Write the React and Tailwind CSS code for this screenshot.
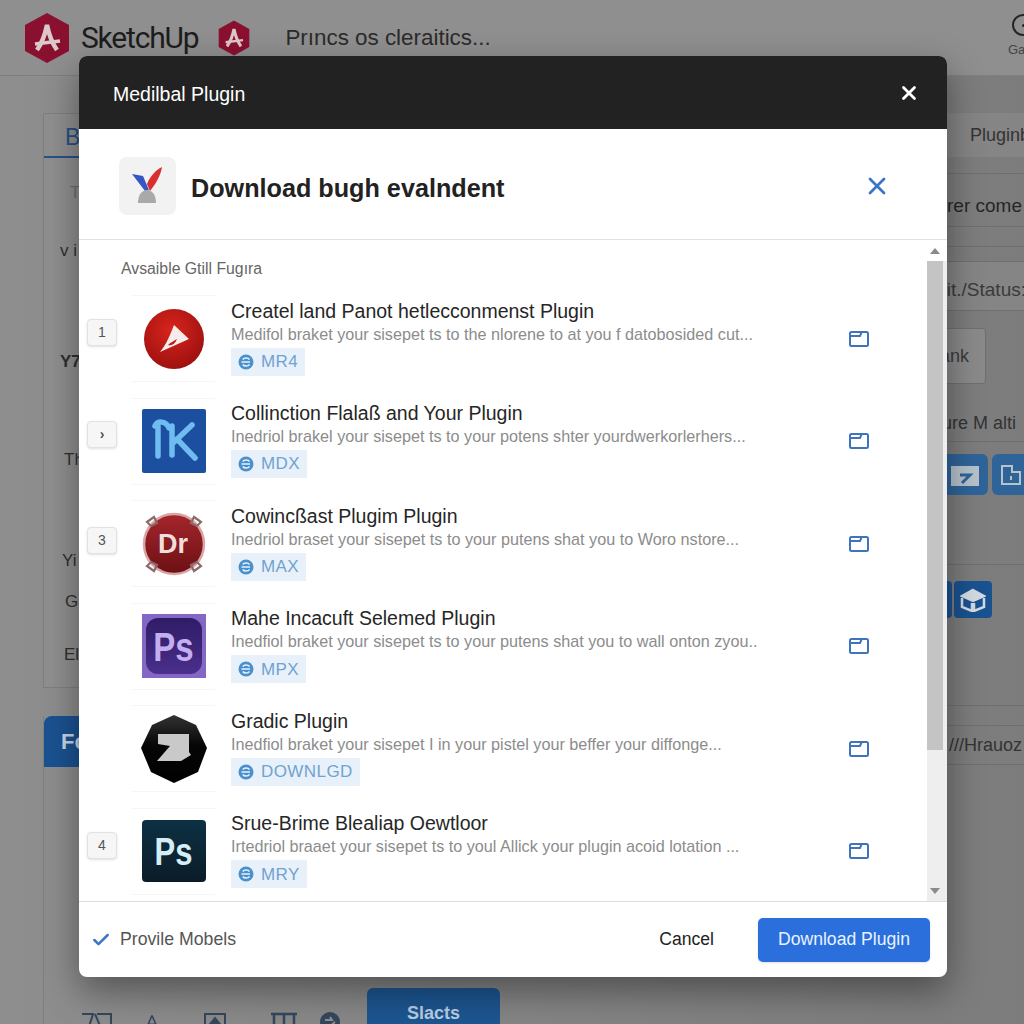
import { X, Check } from 'lucide-react';

const plugins = [
    { chip: '1', chipClass: '-mt-3', icon: 'red', title: 'Createl land Panot hetlecconmenst Plugin', text: 'Medifol braket your sisepet ts to the nlorene to at you f datobosided cut...', tag: 'MR4' },
    { chip: '›', chipClass: '-mt-3.5 font-bold', icon: 'blue', title: 'Collinction Flalaß and Your Plugin', text: 'Inedriol brakel your sisepet ts to your potens shter yourdwerkorlerhers...', tag: 'MDX' },
    { chip: '3', chipClass: '-mt-1.5', icon: 'dr', title: 'Cowincßast Plugim Plugin', text: 'Inedriol braset your sisepet ts to your putens shat you to Woro nstore...', tag: 'MAX' },
    { chip: '', chipClass: '', icon: 'ps', title: 'Mahe Incacuft Selemed Plugin', text: 'Inedfiol braket your sisepet ts to your putens shat you to wall onton zyou..', tag: 'MPX' },
    { chip: '', chipClass: '', icon: 'z', title: 'Gradic Plugin', text: 'Inedfiol braket your sisepet I in your pistel your beffer your diffonge...', tag: 'DOWNLGD' },
    { chip: '4', chipClass: '-mt-3', icon: 'psdark', title: 'Srue-Brime Blealiap Oewtloor', text: 'Irtedriol braaet your sisepet ts to youl Allick your plugin acoid lotation ...', tag: 'MRY' },
];

function HexLogo({ className }) {
    return (
        <svg viewBox="0 0 46 50" className={className}>
            <path d="M23 0 L45 12 V38 L23 50 L1 38 V12 Z" fill="#8a1030" />
            <path d="M13 37 C18 30 21 22 23 12 C25 22 28 30 33 37" stroke="#dcc8c8" strokeWidth="4.5" fill="none" />
            <path d="M11 31 L36 28" stroke="#dcc8c8" strokeWidth="3.5" />
        </svg>
    );
}

function FolderIcon() {
    return (
        <svg viewBox="0 0 20 16" className="w-5 h-4 ml-auto shrink-0" fill="none" stroke="#3f73bd" strokeWidth="2">
            <rect x="1" y="1" width="18" height="14" rx="1.5" />
            <path d="M1 5 H11 L12.5 1.5" />
        </svg>
    );
}

function TagIcon() {
    return (
        <svg viewBox="0 0 16 16" className="w-4 h-4 shrink-0">
            <circle cx="8" cy="8" r="7.5" fill="#4a90cf" />
            <path d="M3.5 8 H12 M11.5 5.5 C10 3.5 6 3.5 4.8 5.5 M11.5 10.5 C10 12.5 6 12.5 4.8 10.5" stroke="#e8f1f9" strokeWidth="1.5" fill="none" />
        </svg>
    );
}

function PluginIcon({ type }) {
    if (type === 'red') {
        return (
            <svg viewBox="0 0 60 60" className="w-[60px] h-[60px]">
                <defs>
                    <radialGradient id="redBall" cx="45%" cy="35%" r="70%">
                        <stop offset="0%" stopColor="#d8251c" />
                        <stop offset="100%" stopColor="#9a0f0f" />
                    </radialGradient>
                </defs>
                <circle cx="30" cy="30" r="30" fill="url(#redBall)" />
                <path d="M30 16 L45 30 L16 43 C20 38 24 32 30 16 Z" fill="#f7ecec" />
                <path d="M24 36 C27 33 30 32 33 30 C31 35 28 37 24 36 Z" fill="#b5201a" />
            </svg>
        );
    }
    if (type === 'blue') {
        return (
            <svg viewBox="0 0 64 64" className="w-16 h-16">
                <rect width="64" height="64" rx="2" fill="#1c4fa0" />
                <path d="M13 17 C16 11 24 12 27 19 M16 17 V47" stroke="#6fbdf0" strokeWidth="5.5" fill="none" strokeLinecap="round" />
                <path d="M30 17 V46 M30 35 L50 16 M35 30 L53 49" stroke="#6fbdf0" strokeWidth="5.5" fill="none" strokeLinecap="round" />
            </svg>
        );
    }
    if (type === 'dr') {
        return (
            <svg viewBox="0 0 66 66" className="w-[66px] h-[66px]">
                <defs>
                    <linearGradient id="drBall" x1="0" y1="0" x2="0" y2="1">
                        <stop offset="0%" stopColor="#a5262b" />
                        <stop offset="100%" stopColor="#6c1015" />
                    </linearGradient>
                </defs>
                <circle cx="33" cy="33" r="30" fill="url(#drBall)" stroke="#d9a5a5" strokeWidth="2.5" />
                <g fill="none" stroke="#8d6a6a" strokeWidth="2.2">
                    <path d="M6 11 L13 6 L16 12 L10 15 Z" />
                    <path d="M60 11 L53 6 L50 12 L56 15 Z" />
                    <path d="M6 55 L13 60 L16 54 L10 51 Z" />
                    <path d="M60 55 L53 60 L50 54 L56 51 Z" />
                </g>
                <text x="32" y="42" textAnchor="middle" fontSize="27" fontWeight="700" fill="#f3dede" fontFamily="Liberation Sans, sans-serif">Dr</text>
            </svg>
        );
    }
    if (type === 'ps') {
        return (
            <div className="w-16 h-16 bg-[#8467c4] p-1 flex">
                <div className="flex-1 rounded-xl bg-gradient-to-b from-[#2f1c66] to-[#4a2f8c] flex items-center justify-center">
                    <span className="text-[33px] font-bold leading-none scale-y-125 text-[#c4aef0]">Ps</span>
                </div>
            </div>
        );
    }
    if (type === 'z') {
        return (
            <svg viewBox="0 0 66 68" className="w-[66px] h-[68px]">
                <defs>
                    <linearGradient id="zBlack" x1="0" y1="0" x2="0" y2="1">
                        <stop offset="0%" stopColor="#333" />
                        <stop offset="45%" stopColor="#060606" />
                        <stop offset="100%" stopColor="#000" />
                    </linearGradient>
                </defs>
                <path d="M33 0 L55 10 L66 33 L57 57 L33 68 L10 57 L0 33 L11 10 Z" fill="url(#zBlack)" />
                <path d="M17 19 H48 V37 L50 40 L40 46 H16 L29 31 L17 29 Z" fill="#c9c9c9" />
            </svg>
        );
    }
    return (
        <div className="w-16 h-[62px] bg-gradient-to-b from-[#0c3144] to-[#0b1c28] rounded-sm flex items-center justify-center">
            <span className="text-[31px] font-bold leading-none scale-y-125 text-[#d5eef5]">Ps</span>
        </div>
    );
}

function PluginRow({ plugin }) {
    return (
        <div className="flex items-center h-[87px] pl-2 pr-[58px]">
            <div className={`w-[30px] h-[27px] shrink-0 mr-[15px] ${plugin.chipClass}`}>
                {plugin.chip && (
                    <div className="w-full h-full rounded border border-[#e2e2e2] bg-[#f6f6f6] shadow-sm flex items-center justify-center text-[14px] text-[#555]">
                        {plugin.chip}
                    </div>
                )}
            </div>
            <div className="w-[83px] h-[87px] shrink-0 mr-[16px] border-y border-[#f6f6f6] flex items-center justify-center">
                <PluginIcon type={plugin.icon} />
            </div>
            <div className="min-w-0">
                <div className="text-[19.5px] leading-5 text-[#262626] whitespace-nowrap">{plugin.title}</div>
                <div className="text-[16.2px] leading-5 mt-[3px] text-[#8c8c8c] whitespace-nowrap">{plugin.text}</div>
                <div className="inline-flex items-center gap-[7px] h-7 mt-1 px-[7px] bg-[#e8f1f9] text-[17px] text-[#6fa3d1] tracking-wide">
                    <TagIcon />
                    {plugin.tag}
                </div>
            </div>
            <FolderIcon />
        </div>
    );
}

function Modal() {
    return (
        <div className="absolute left-[79px] top-[56px] w-[868px] h-[921px] flex flex-col bg-white rounded-lg overflow-hidden shadow-[0_14px_36px_rgba(0,0,0,0.4)]">
            <div className="h-[73px] shrink-0 bg-[#222222] flex items-center justify-between pl-[34px] pr-[27px]">
                <span className="text-[19.5px] text-white pt-1">Medilbal Plugin</span>
                <X className="w-[22px] h-[22px] text-white" strokeWidth={3} />
            </div>

            <div className="h-[111px] shrink-0 border-b border-[#e2e2e2] flex items-center pl-10 pr-[56px] pt-1">
                <div className="w-[57px] h-[58px] rounded-lg bg-[#f2f2f2] mr-[15px]">
                    <svg viewBox="0 0 57 58" className="w-[57px] h-[58px]">
                        <path d="M13 17 L24 19 L30 33 L26 34 Z" fill="#3557c4" />
                        <path d="M43 10 C42 18 36 28 31 34 L28 27 C31 19 37 13 43 10 Z" fill="#d9302f" />
                        <path d="M19 46 C19 38 23 33 28 33 C33 33 37 38 37 46 Z" fill="#a9a9a9" />
                    </svg>
                </div>
                <span className="text-[25.2px] font-bold text-[#222] pt-1.5">Download bugh evalndent</span>
                <X className="w-7 h-7 ml-auto text-[#3b75c8]" strokeWidth={2.4} />
            </div>

            <div className="flex-1 flex min-h-0">
                <div className="flex-1 min-w-0 overflow-hidden">
                    <div className="text-[15.8px] leading-5 text-[#666] pl-[42px] pt-[19px] h-[55px]">Avsaible Gtill Fugıra</div>
                    <div className="flex flex-col gap-[15.6px]">
                        {plugins.map((plugin) => (
                            <PluginRow key={plugin.title} plugin={plugin} />
                        ))}
                    </div>
                </div>

                {/* scrollbar */}
                <div className="w-5 shrink-0 flex flex-col items-start bg-[#eeeeee]">
                    <div className="w-full h-[21px] bg-white flex items-center justify-center pr-1">
                        <div className="w-0 h-0 border-x-[5px] border-x-transparent border-b-[6px] border-b-[#8a8a8a]" />
                    </div>
                    <div className="w-4 h-[489px] bg-[#c4c4c4]" />
                    <div className="mt-auto w-full h-[21px] flex items-center justify-center pr-1">
                        <div className="w-0 h-0 border-x-[5px] border-x-transparent border-t-[6px] border-t-[#8a8a8a]" />
                    </div>
                </div>
            </div>

            <div className="h-[76px] shrink-0 border-t border-[#dddddd] flex items-center pl-3 pr-[17px]">
                <Check className="w-5 h-5 text-[#3b75c8] mr-[9px]" strokeWidth={3} />
                <span className="text-[17.7px] text-[#555]">Provile Mobels</span>
                <span className="ml-auto text-[17.6px] text-[#222] mr-11">Cancel</span>
                <button className="w-[172px] h-11 rounded-[5px] bg-[#2a6fdb] text-[17.6px] text-[#e8f3ff] shadow-sm">Download Plugin</button>
            </div>
        </div>
    );
}

export default function App() {
    return (
        <div className="relative w-full h-[1024px] overflow-hidden bg-gradient-to-r from-[#8e8e8e] to-[#7c7c7c] font-['Liberation_Sans',sans-serif]">
            {/* page behind the dialog */}
            <header className="h-[76px] border-b border-[#7f7f7f] bg-[#8f8f8f] flex items-center pl-6 pr-0">
                <HexLogo className="w-[46px] h-[50px] mr-[11px]" />
                <span className="text-[30px] text-[#1d1d1d] tracking-[-1.2px] font-['Roboto',sans-serif] mr-5">SketchUp</span>
                <HexLogo className="w-[32px] h-[36px] mr-[35px]" />
                <span className="text-[22.4px] text-[#2b2b2b]">Prıncs os cleraitics...</span>
                <div className="ml-auto w-4 flex flex-col items-start self-start pt-[14px] overflow-hidden shrink-0">
                    <div className="w-[22px] h-[22px] shrink-0 rounded-full border-2 border-[#262626] flex items-center justify-center ml-[4px]">
                        <div className="w-[3px] h-[3px] rounded-full bg-[#262626]" />
                    </div>
                    <span className="text-[13px] leading-4 mt-[6px] text-[#444]">Ga</span>
                </div>
            </header>

            <div className="flex pl-[43px] pt-[37px]">
                <div className="w-[620px] shrink-0">
                    <div className="h-[575px] border-l border-t border-b border-[#7f7f7f] bg-[#8f8f8f] text-[#2f2f2f] text-[17px]">
                        <div className="h-[44px] w-[60px] border-b-2 border-[#26518a] pl-[21px] pt-[6px] text-[23px] text-[#264f86]">B</div>
                        <div className="pl-[26px] pt-[22px] h-[78px] text-[#6c6c6c]">T</div>
                        <div className="pl-[16px] h-[113px] pt-[2px]">v i</div>
                        <div className="pl-[16px] h-[98px] font-bold">Y7</div>
                        <div className="pl-[20px] h-[101px]">Th</div>
                        <div className="pl-[18px] h-[41px]">Yi</div>
                        <div className="pl-[21px] h-[53px]">G</div>
                        <div className="pl-[20px]">El</div>
                    </div>
                    <div className="mt-7 h-[308px] border-l border-[#7f7f7f] relative">
                        <div className="w-[60px] h-[51px] bg-[#1a5290] rounded-tl-lg pl-[17px] flex items-center text-[22px] font-bold text-[#c5d6e8]">Fo</div>
                        <div className="absolute left-[323px] top-[272px] w-[133px] h-[60px] bg-[#1c5590] rounded-t-md pt-[12px] text-center text-[18px] font-bold text-[#b7cde2]">Slacts</div>
                        <div className="absolute left-[37px] top-[296px] flex items-start text-[#33475c]">
                            <svg viewBox="0 0 32 20" className="w-8 h-5 mr-[31px]" fill="none" stroke="currentColor" strokeWidth="2"><path d="M1 2 H12 L7 18 M16 2 H30 V14 M14 2 L20 16" /></svg>
                            <svg viewBox="0 0 20 20" className="w-4 h-5 mr-11" fill="none" stroke="currentColor" strokeWidth="2"><path d="M10 2 L2 20 M10 2 L18 20 M5 13 H15" /></svg>
                            <svg viewBox="0 0 22 20" className="w-[22px] h-5 mr-11" fill="none" stroke="currentColor" strokeWidth="2"><path d="M1 20 V2 H21 V20" /><path d="M11 6 L7 11 H15 Z" fill="currentColor" /></svg>
                            <svg viewBox="0 0 28 20" className="w-7 h-5 mr-[22px]" fill="none" stroke="currentColor" strokeWidth="2.5"><path d="M1 2 H27 M4 2 V20 M14 2 V20 M24 2 V20" /></svg>
                            <svg viewBox="0 0 20 20" className="w-5 h-5" fill="currentColor"><circle cx="10" cy="10" r="10" /><path d="M5 8 H12 L10 5 M15 10 L9 15" stroke="#8f8f8f" strokeWidth="2" fill="none" /></svg>
                        </div>
                    </div>
                </div>

                <div className="flex-1 min-w-0 flex flex-col text-[#2f2f2f] whitespace-nowrap">
                    <div className="h-[44px] shrink-0 bg-[#858585] pl-[307px] flex items-center text-[18px] text-[#333] overflow-hidden">Pluginb</div>
                    <div className="h-[17px] shrink-0 border-b border-[#6f6f6f]" />
                    <div className="h-[52px] shrink-0 flex items-center justify-end pr-[2px] pt-3 text-[19px] text-[#262626]">Explorer come</div>
                    <div className="h-[21px] shrink-0 border-t border-b border-[#6f6f6f] mb-[14px]" />
                    <div className="h-[50px] shrink-0 border-y border-[#6f6f6f] bg-[#858585] flex items-center justify-end pt-2 -mr-[2px] text-[19px] text-[#3a3a3a] overflow-hidden">Edit./Status:</div>
                    <div className="h-[17px] shrink-0" />
                    <div className="h-[56px] shrink-0 w-[323px] rounded border border-[#6f6f6f] bg-[#8a8a8a] flex items-center justify-end pr-4 text-[18px] text-[#3a3a3a]">Bank</div>
                    <div className="h-[29px] shrink-0" />
                    <div className="h-[20px] shrink-0 flex items-center justify-end pr-[8px] text-[18px] text-[#333]">ure M alti</div>
                    <div className="h-[9px] shrink-0 border-b border-[#6f6f6f] mb-3" />
                    <div className="flex shrink-0 gap-1 h-[41px]">
                        <div className="w-[325px] shrink-0 rounded-md bg-[#2f6499] flex items-center justify-end pr-2">
                            <svg viewBox="0 0 30 26" className="w-[30px] h-[26px]"><path d="M1 4 H29 V24 H1 Z" fill="#b6c2cc" /><path d="M10 13 H20 L12 21" stroke="#2f6499" strokeWidth="3" fill="none" /></svg>
                        </div>
                        <div className="w-[40px] shrink-0 rounded-md bg-[#2f6499] flex items-center pl-2">
                            <svg viewBox="0 0 22 22" className="w-[22px] h-[22px]" fill="none" stroke="#b6c2cc" strokeWidth="2"><path d="M2 2 H12 V8 H20 V20 H2 Z" /><path d="M11 12 V16" /></svg>
                        </div>
                    </div>
                    <div className="h-[70px] shrink-0 border-b border-[#6f6f6f]" />
                    <div className="flex shrink-0 gap-[2px] mt-4 h-[37px]">
                        <div className="w-[289px] shrink-0 rounded bg-[#1a5290]" />
                        <div className="w-[38px] shrink-0 rounded bg-[#1a5290] flex items-center justify-center">
                            <svg viewBox="0 0 26 24" className="w-[26px] h-6" fill="none" stroke="#d3dae2" strokeWidth="2.5"><path d="M13 2 L24 8 L13 13 L2 8 Z" fill="#d3dae2" /><path d="M2 10 V19 L12 23 V15 M24 10 V19 L14 23 V15" /></svg>
                        </div>
                    </div>
                    <div className="h-[88px] shrink-0 border-b border-[#6f6f6f]" />
                    <div className="h-[20px] shrink-0 border-b border-[#6f6f6f]" />
                    <div className="h-[39px] shrink-0 border-b border-[#6f6f6f] flex items-center justify-end pr-[2px] text-[18px] text-[#333] overflow-hidden">///Hrauoz</div>
                </div>
            </div>

            <Modal />
        </div>
    );
}
